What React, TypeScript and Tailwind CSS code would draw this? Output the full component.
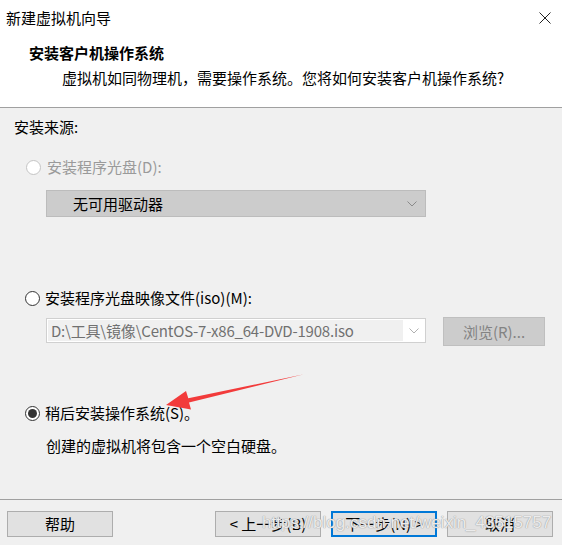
import React from "react";

const font = { fontFamily: '"Noto Sans CJK SC", "Noto Sans", sans-serif' };

function Radio({ checked, disabled }: { checked?: boolean; disabled?: boolean }) {
  return (
    <span
      className={
        "flex items-center justify-center w-[15px] h-[15px] rounded-full border bg-white " +
        (disabled ? "border-[#c4c4c4]" : "border-[#333333]")
      }
    >
      {checked && <span className="w-[9px] h-[9px] rounded-full bg-[#333333]" />}
    </span>
  );
}

function Chevron({ color }: { color: string }) {
  return (
    <svg width="10" height="6" viewBox="0 0 10 6">
      <path d="M0.5 0.5 L5 5 L9.5 0.5" fill="none" stroke={color} strokeWidth="1" />
    </svg>
  );
}

function Btn({ children, primary }: { children: React.ReactNode; primary?: boolean }) {
  return (
    <div
      className={
        "w-[106px] h-[26px] flex items-center justify-center bg-[#e1e1e1] text-[15px] text-black leading-[20px] " +
        (primary ? "border-2 border-[#0078d7]" : "border border-[#adadad]")
      }
    >
      {children}
    </div>
  );
}

export default function App() {
  return (
    <div className="relative w-[562px] h-[545px] bg-[#f0f0f0] flex flex-col overflow-hidden text-black" style={font}>
      {/* header */}
      <div className="h-[108px] bg-white border-b border-[#a0a0a0] flex flex-col">
        <div className="h-[34px] flex items-center justify-between pl-[6px] pr-[11px] pt-[1px]">
          <span className="text-[15px] leading-[20px]">新建虚拟机向导</span>
          <svg width="12" height="12" viewBox="0 0 12 12" className="mt-[1px]">
            <path d="M0.5 0.5 L11.5 11.5 M11.5 0.5 L0.5 11.5" stroke="#222" strokeWidth="1" />
          </svg>
        </div>
        <div className="pl-[29px] mt-[9px] h-[20px] flex items-center text-[15px] font-bold leading-[20px]">
          安装客户机操作系统
        </div>
        <div className="pl-[62px] mt-[5px] h-[20px] flex items-center text-[15px] leading-[20px]">
          虚拟机如同物理机，需要操作系统。您将如何安装客户机操作系统?
        </div>
      </div>

      {/* body */}
      <div className="flex flex-col">
        <div className="mt-[9px] pl-[14px] h-[20px] flex items-center text-[15px] leading-[20px]">安装来源:</div>

        <div className="mt-[20px] pl-[26px] h-[20px] flex items-center gap-[6px] text-[15px] leading-[20px] text-[#9a9a9a]">
          <Radio disabled />
          <span>安装程序光盘(D):</span>
        </div>

        <div className="mt-[13px] ml-[46px] w-[380px] h-[27px] bg-[#cccccc] border border-[#bcbcbc] flex items-center justify-between pl-[26px] pr-[8px]">
          <span className="text-[15px] leading-[20px]">无可用驱动器</span>
          <Chevron color="#8a8a8a" />
        </div>

        <div className="mt-[71px] pl-[25px] h-[20px] flex items-center gap-[5px] text-[15px] leading-[20px]">
          <Radio />
          <span>安装程序光盘映像文件(iso)(M):</span>
        </div>

        <div className="mt-[9px] h-[30px] flex items-start">
          <div className="mt-[1px] ml-[46px] w-[380px] h-[25px] bg-white border border-[#d0d0d0] flex items-stretch p-[1px]">
            <div className="flex-1 bg-[#f0f0f0] flex items-center pl-[3px] text-[15px] leading-[20px] text-[#707070] whitespace-nowrap overflow-hidden tracking-[-0.2px]">
              D:\工具\镜像\CentOS-7-x86_64-DVD-1908.iso
            </div>
            <div className="w-[21px] flex items-center justify-center">
              <Chevron color="#b0b0b0" />
            </div>
          </div>
          <div className="ml-[17px] w-[102px] h-[29px] bg-[#cccccc] border border-[#bfbfbf] flex items-center justify-center text-[15px] leading-[20px] text-[#838383]">
            浏览(R)...
          </div>
        </div>

        <div className="mt-[56px] pl-[25px] h-[20px] flex items-center gap-[5px] text-[15px] leading-[20px]">
          <Radio checked />
          <span>稍后安装操作系统(S)。</span>
        </div>

        <div className="mt-[13px] pl-[46px] h-[20px] flex items-center text-[15px] leading-[20px]">
          创建的虚拟机将包含一个空白硬盘。
        </div>
      </div>

      {/* footer */}
      <div className="mt-[43px] border-t border-[#a0a0a0] pt-[11px] flex items-center pl-[7px] pr-[9px]">
        <Btn>帮助</Btn>
        <div className="flex-1" />
        <div className="flex items-center gap-[10px]">
          <Btn>&lt; 上一步(B)</Btn>
          <Btn primary>下一步(N) &gt;</Btn>
          <Btn>取消</Btn>
        </div>
      </div>

      {/* red arrow annotation */}
      <svg className="absolute inset-0 pointer-events-none" width="562" height="545" viewBox="0 0 562 545">
        <polygon
          points="304,374.3 189,402.4 191,409.5 166,405 186,391 188.3,398.2"
          fill="#f23b3b"
        />
      </svg>

      {/* watermark */}
      <div
        className="absolute left-[262px] top-[512px] text-[17px] leading-[22px] text-white/80 whitespace-nowrap pointer-events-none [text-shadow:0_0_1px_#9a9a9a,0_0_1px_#9a9a9a]"
        style={{ fontFamily: '"Liberation Sans", Arial, sans-serif' }}
      >
        https://blog.csdn.net/weixin_43515757
      </div>
    </div>
  );
}
